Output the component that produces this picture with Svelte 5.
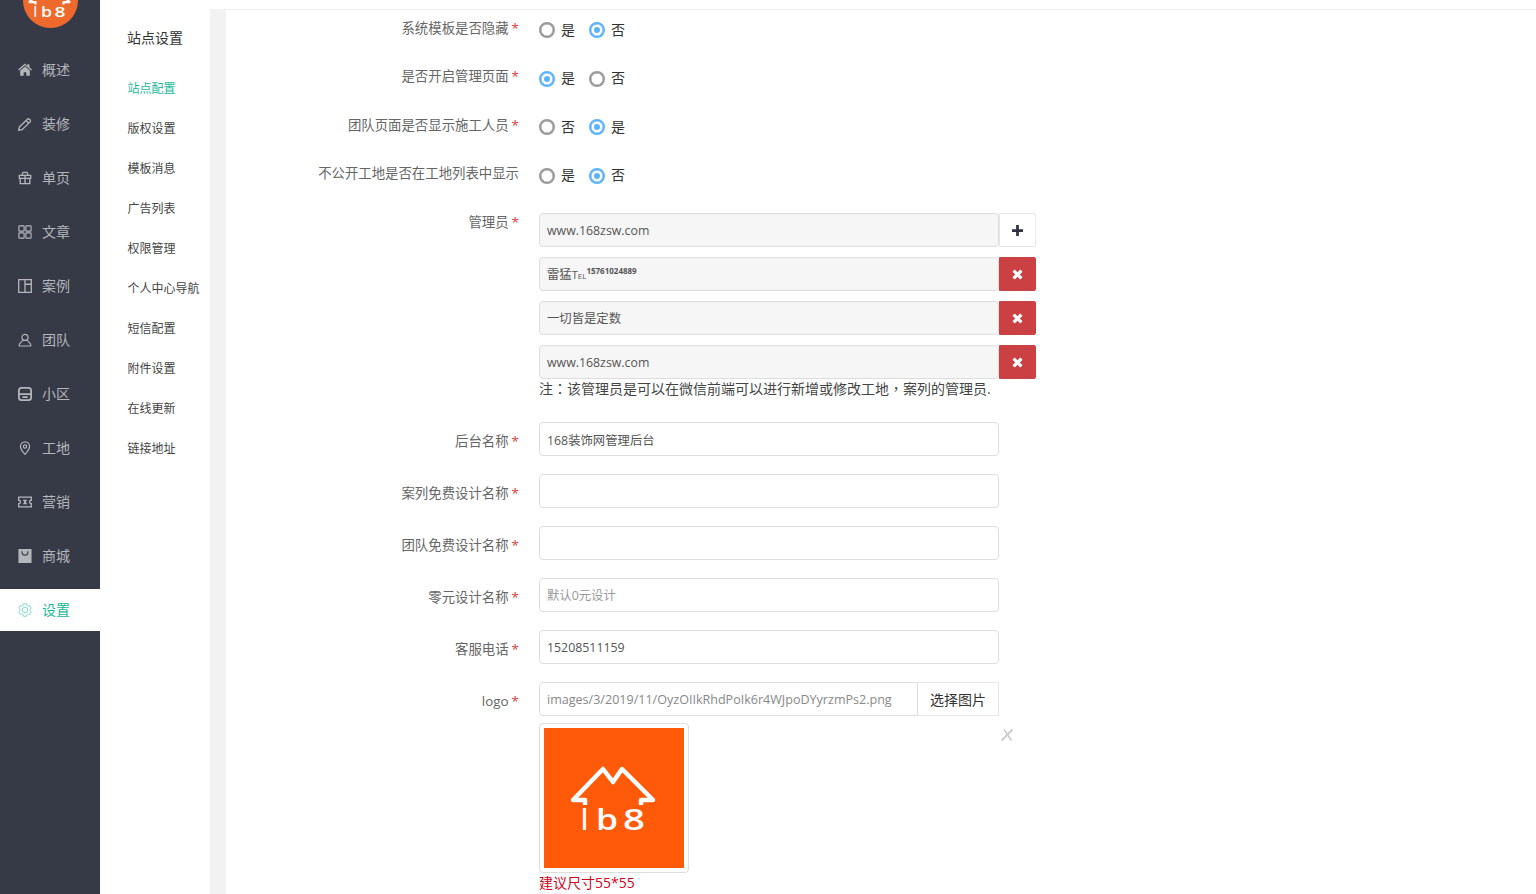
<script>
  const navItems = [
    { name: "概述", icon: "home" },
    { name: "装修", icon: "pencil" },
    { name: "单页", icon: "gift" },
    { name: "文章", icon: "grid" },
    { name: "案例", icon: "columns" },
    { name: "团队", icon: "user" },
    { name: "小区", icon: "store" },
    { name: "工地", icon: "pin" },
    { name: "营销", icon: "ticket" },
    { name: "商城", icon: "bag" },
    { name: "设置", icon: "gear", active: true }
  ];

  const subItems = ["站点配置", "版权设置", "模板消息", "广告列表", "权限管理", "个人中心导航", "短信配置", "附件设置", "在线更新", "链接地址"];

  const radioRows = [
    { label: "系统模板是否隐藏", required: true, options: ["是", "否"], checked: 1 },
    { label: "是否开启管理页面", required: true, options: ["是", "否"], checked: 0 },
    { label: "团队页面是否显示施工人员", required: true, options: ["否", "是"], checked: 1 },
    { label: "不公开工地是否在工地列表中显示", required: false, options: ["是", "否"], checked: 1 }
  ];

  const textRows = [
    { label: "后台名称", value: "168装饰网管理后台" },
    { label: "案列免费设计名称", value: "" },
    { label: "团队免费设计名称", value: "" },
    { label: "零元设计名称", value: "", placeholder: "默认0元设计" },
    { label: "客服电话", value: "15208511159" }
  ];
</script>

{#snippet logoMark()}
  <svg class="mark" viewBox="0 0 140 140">
    <path d="M41 77V72H29L59 41 69 54 78 41 109 72H97V77" fill="none" stroke="#fff" stroke-width="4.500" stroke-linejoin="round" />
    <text x="37" y="102" textLength="7" lengthAdjust="spacingAndGlyphs">l</text>
    <text x="52" y="102" textLength="22" lengthAdjust="spacingAndGlyphs">b</text>
    <text x="79" y="102" textLength="22" lengthAdjust="spacingAndGlyphs">8</text>
  </svg>
{/snippet}

{#snippet navIcon(name)}
  <svg class="nav-icon" viewBox="0 0 16 16">
    {#if name === "home"}
      <path class="solid" d="M8 .5 0 7.300l1 1.200L8 2.600l7 5.900 1-1.200-3-2.500V1.500h-2.300v2zM8 4 2.500 8.700V14.500h4v-4h3v4h4V8.700z" />
    {:else if name === "pencil"}
      <path stroke-width="1.500" d="M1.500 11.500 10.800 2.500a1.500 1.500 0 0 1 2.100 0l1 1a1.500 1.500 0 0 1 0 2.100L4.700 14.500.8 15zM9.300 4 12.400 7.100" />
    {:else if name === "gift"}
      <path stroke-width="1.500" d="M1.500 5h13v3.500h-13zM2.500 8.500h11v6h-11zM8 5v9.500M5 5V3q0-1.500 1.500-1.500h3Q11 1.500 11 3v2" />
    {:else if name === "grid"}
      <rect x="1" y="1" width="6" height="6" rx=".8" />
      <rect x="9" y="1" width="6" height="6" rx=".8" />
      <rect x="1" y="9" width="6" height="6" rx=".8" />
      <rect x="9" y="9" width="6" height="6" rx=".8" />
    {:else if name === "columns"}
      <path stroke-width="1.500" d="M.8.8h14.400v14.400H.8zM8 .8v14.400M8 6h7.200" />
    {:else if name === "user"}
      <circle cx="8" cy="5" r="3.500" />
      <path d="M5.300 8.500 1.500 12.800v2h13v-2L10.700 8.500" />
    {:else if name === "store"}
      <path stroke-width="2" d="M1 7V4q0-3 3-3h8q3 0 3 3v8q0 3-3 3H4q-3 0-3-3zM1 8h14M5 11.500h6" />
    {:else if name === "pin"}
      <path stroke-width="1.400" d="M8 15.200C5 12 2.800 9.500 2.800 6.300a5.200 5.200 0 0 1 10.400 0c0 3.200-2.200 5.700-5.200 8.900z" />
      <circle cx="8" cy="6.300" r="1.900" />
    {:else if name === "ticket"}
      <path stroke-width="1.500" d="M.8 2.500h14.400v3.500a2 2 0 0 0 0 4v3.500H.8V10a2 2 0 0 0 0-4z" />
      <path class="solid" d="M5.500 5.500h5l-1.500 2.500 1.500 2.500h-5l1.500-2.500z" />
    {:else if name === "bag"}
      <path class="solid" d="M.5 0h15v16H.5z" />
      <path class="cut" d="M4.500 2.500c0 6 7 6 7 0" />
    {:else if name === "gear"}
      <circle cx="8" cy="8" r="3.200" />
      <path d="M6.400.8h3.200l.5 1.800 1.600.9 1.800-.5 1.600 2.800-1.300 1.300v1.800l1.300 1.300-1.600 2.800-1.800-.5-1.600.9-.5 1.800H6.400l-.5-1.800-1.600-.9-1.800.5L.9 10.200l1.300-1.300V7.100L.9 5.800 2.500 3l1.800.5 1.600-.9z" />
    {/if}
  </svg>
{/snippet}

{#snippet fieldLabel(text, required)}
  <div class="label">{text}{#if required}<span class="star">*</span>{/if}</div>
{/snippet}

<div class="page">
  <aside class="sidebar">
    <div class="logo">{@render logoMark()}</div>
    <nav>
      {#each navItems as item}
        <div class="nav-item" class:active={item.active}>
          {@render navIcon(item.icon)}
          <span>{item.name}</span>
        </div>
      {/each}
    </nav>
  </aside>

  <section class="subnav">
    <h3>站点设置</h3>
    {#each subItems as item, i}
      <div class="sub-item" class:current={i === 0}>{item}</div>
    {/each}
  </section>

  <div class="gutter"></div>

  <main class="content">
    <form>
      {#each radioRows as row}
        <div class="row radio-row">
          {@render fieldLabel(row.label, row.required)}
          <div class="radios">
            {#each row.options as option, i}
              <label class="radio">
                <span class="dot" class:on={row.checked === i}></span>
                <span class="opt">{option}</span>
              </label>
            {/each}
          </div>
        </div>
      {/each}

      <div class="row admin-row">
        {@render fieldLabel("管理员", true)}
        <div class="field admins">
          <div class="group">
            <div class="input disabled">www.168zsw.com</div>
            <button type="button" class="addon">
              <svg viewBox="0 0 12 12"><path d="M4.500 0h3v4.500H12v3H7.500V12h-3V7.500H0v-3h4.500z" /></svg>
            </button>
          </div>
          <div class="group">
            <div class="input disabled">雷猛<span class="tel">Tel</span><sup>15761024889</sup></div>
            <button type="button" class="addon danger">
              <svg viewBox="0 0 12 12"><path d="M3 .5 6 3.500 9 .5 11.500 3 8.500 6 11.500 9 9 11.500 6 8.500 3 11.500 .5 9 3.500 6 .5 3z" /></svg>
            </button>
          </div>
          <div class="group">
            <div class="input disabled">一切皆是定数</div>
            <button type="button" class="addon danger">
              <svg viewBox="0 0 12 12"><path d="M3 .5 6 3.500 9 .5 11.500 3 8.500 6 11.500 9 9 11.500 6 8.500 3 11.500 .5 9 3.500 6 .5 3z" /></svg>
            </button>
          </div>
          <div class="group">
            <div class="input disabled">www.168zsw.com</div>
            <button type="button" class="addon danger">
              <svg viewBox="0 0 12 12"><path d="M3 .5 6 3.500 9 .5 11.500 3 8.500 6 11.500 9 9 11.500 6 8.500 3 11.500 .5 9 3.500 6 .5 3z" /></svg>
            </button>
          </div>
          <p class="note">注：该管理员是可以在微信前端可以进行新增或修改工地，案列的管理员.</p>
        </div>
      </div>

      {#each textRows as row}
        <div class="row text-row">
          {@render fieldLabel(row.label, true)}
          <div class="field">
            <input class="input" value={row.value} placeholder={row.placeholder ?? ""} />
          </div>
        </div>
      {/each}

      <div class="row logo-row">
        {@render fieldLabel("logo", true)}
        <div class="field">
          <div class="picker">
            <input class="input path" value="images/3/2019/11/OyzOIIkRhdPoIk6r4WJpoDYyrzmPs2.png" />
            <button type="button" class="choose">选择图片</button>
          </div>
          <div class="thumb-wrap">
            <div class="thumb">{@render logoMark()}</div>
            <svg class="remove" viewBox="0 0 14 14"><path d="M1.500 12.500 12.500 1.500" stroke-width="2" /><path d="M4 1.500 11.500 12.500" stroke-width="1.600" /></svg>
          </div>
          <div class="hint">建议尺寸55*55</div>
        </div>
      </div>
    </form>
  </main>
</div>

<style>
  :global(body) {
    margin: 0;
    overflow: hidden;
    background: #fff;
  }

  .page {
    display: flex;
    height: 894px;
    overflow: hidden;
    font-family: "Open Sans", "Noto Sans CJK SC", sans-serif;
    font-size: 13px;
    color: #333;
  }

  .sidebar {
    width: 100px;
    flex: none;
    background: #363a47;
  }

  .logo {
    width: 55px;
    height: 55px;
    margin: -27px auto 21px;
    border-radius: 50%;
    background: #ee6a2c;
    overflow: hidden;
    display: flex;
    align-items: center;
    justify-content: center;
  }

  .logo .mark {
    width: 70px;
    height: 70px;
    flex: none;
  }

  .mark text {
    font-family: "Open Sans", sans-serif;
    font-size: 29px;
    font-weight: 600;
    fill: #fff;
  }

  .nav-item {
    height: 42px;
    margin-bottom: 12px;
    padding-left: 18px;
    display: flex;
    align-items: center;
    gap: 10px;
    font-size: 14px;
    color: #b4b6bb;
  }

  .nav-item span {
    margin-bottom: 2px;
  }

  .nav-item.active {
    background: #fff;
    color: #1ab99a;
  }

  .nav-icon {
    width: 14px;
    height: 14px;
    flex: none;
    overflow: visible;
    fill: none;
    stroke: currentColor;
    stroke-width: 1.300;
  }

  .nav-item.active .nav-icon {
    opacity: 0.6;
    stroke-width: 1;
  }

  .nav-icon .solid {
    fill: currentColor;
    stroke: none;
  }

  .nav-icon .cut {
    stroke: #363a47;
  }

  .subnav {
    width: 110px;
    flex: none;
    box-sizing: border-box;
    padding-left: 27px;
    background: #fff;
  }

  .subnav h3 {
    margin: 0 0 21px;
    padding-top: 28px;
    line-height: 20px;
    font-size: 14px;
    font-weight: 400;
    color: #333;
  }

  .sub-item {
    height: 40px;
    padding-left: 0.5px;
    line-height: 40px;
    font-size: 12px;
    white-space: nowrap;
    color: #444;
  }

  .sub-item.current {
    color: #1ab99a;
  }

  .gutter {
    width: 16px;
    flex: none;
    margin-top: 9px;
    background: #f2f2f2;
  }

  .content {
    flex: 1;
    border-top: 1px solid #f0f0f0;
    margin-top: 9px;
    padding-top: 3px;
    margin-left: -16px;
    padding-left: 16px;
  }

  form {
    width: 810px;
  }

  .row {
    display: flex;
    gap: 20px;
  }

  .label {
    width: 293px;
    flex: none;
    box-sizing: border-box;
    text-align: right;
    font-size: 13.400px;
    line-height: 20px;
    color: #666;
    white-space: nowrap;
  }

  .star {
    margin-left: 3px;
    color: #e4393c;
  }

  .radio-row {
    height: 33.500px;
    margin-bottom: 15px;
    align-items: center;
  }

  .radio-row .label {
    margin-top: -4px;
  }

  .radios {
    display: flex;
    gap: 14px;
    align-items: center;
  }

  .radio {
    display: flex;
    align-items: center;
    gap: 6px;
    font-size: 14px;
    color: #333;
  }

  .opt {
    margin-bottom: 2px;
  }

  .dot {
    width: 12px;
    height: 12px;
    margin-top: 1px;
    border: 2px solid #999;
    border-radius: 50%;
    box-shadow: inset 0 0 0 0.5px #999;
    position: relative;
  }

  .dot.on {
    border-color: #5cb3fd;
    box-shadow: inset 0 0 0 0.5px #5cb3fd;
  }

  .dot.on::after {
    content: "";
    position: absolute;
    left: 3px;
    top: 3px;
    width: 6px;
    height: 6px;
    border-radius: 50%;
    background: #5cb3fd;
  }

  .admin-row {
    margin-top: 21px;
    margin-bottom: 23px;
  }

  .admin-row .label {
    margin-top: -1px;
  }

  .text-row .label,
  .logo-row .label {
    padding-top: 9px;
  }

  .field {
    width: 497px;
  }

  .group {
    display: flex;
    margin-bottom: 10px;
  }

  .group:nth-last-child(2) {
    margin-bottom: 0;
  }

  .input {
    display: block;
    width: 460px;
    height: 34px;
    box-sizing: border-box;
    padding: 1px 7px 0;
    border: 1px solid #ddd;
    border-radius: 4px;
    background: #fff;
    font: inherit;
    font-size: 12.350px;
    line-height: 32px;
    color: #555;
    outline: none;
  }

  .input::placeholder {
    color: #999;
  }

  .input.disabled {
    background: #f6f6f6;
  }

  .tel {
    font-size: 11px;
    font-variant: small-caps;
  }

  sup {
    font-size: 8px;
    font-weight: 700;
    line-height: 0;
    vertical-align: 5px;
  }

  .addon {
    width: 37px;
    height: 34px;
    padding: 0;
    border: 1px solid #e7e7e7;
    border-radius: 0 2px 2px 0;
    background: #fff;
    display: flex;
    align-items: center;
    justify-content: center;
  }

  .addon svg {
    width: 11px;
    height: 11px;
    fill: #2f3240;
  }

  .addon.danger {
    background: #cb4043;
    border-color: #cb4043;
  }

  .addon.danger svg {
    fill: #fff;
  }

  .note {
    margin: 0;
    font-family: "Open Sans", "Noto Sans CJK TC", sans-serif;
    font-size: 14px;
    line-height: 20px;
    color: #444;
  }

  .text-row {
    margin-bottom: 18px;
  }

  .picker {
    display: flex;
  }

  .input.path {
    width: 379px;
    border-radius: 4px 0 0 4px;
    font-size: 12.550px;
    color: #888;
  }

  .choose {
    width: 81px;
    height: 34px;
    border: 1px solid #e7e7e7;
    border-left: 0;
    background: #fff;
    font: inherit;
    font-size: 14px;
    color: #333;
  }

  .thumb-wrap {
    position: relative;
    margin-top: 7px;
  }

  .thumb {
    width: 150px;
    height: 150px;
    box-sizing: border-box;
    padding: 4px;
    border: 1px solid #ddd;
    border-radius: 4px;
  }

  .thumb .mark {
    display: block;
    width: 140px;
    height: 140px;
    background: #ff5a0a;
  }

  .remove {
    position: absolute;
    left: 461px;
    top: 5px;
    width: 14px;
    height: 14px;
    fill: none;
    stroke: #cdcdcd;
  }

  .hint {
    font-size: 14px;
    line-height: 20px;
    color: #d0021b;
  }
</style>
